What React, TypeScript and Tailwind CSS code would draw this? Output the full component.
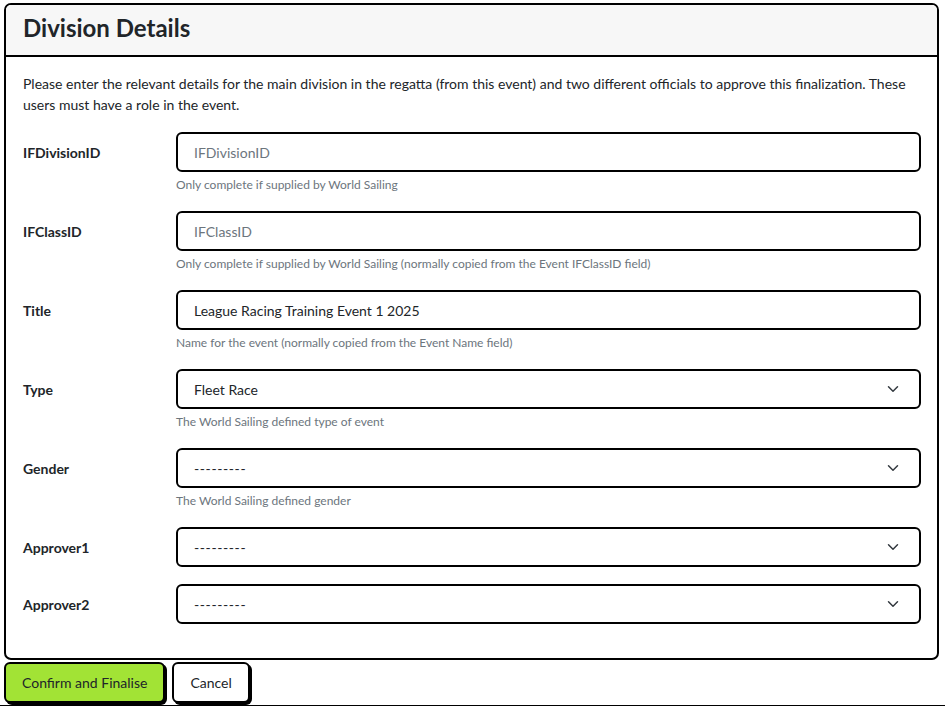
import React from "react";

const font = { fontFamily: 'Lato, "Noto Sans", sans-serif' };

function Chevron() {
  return (
    <svg width="12" height="12" viewBox="0 0 16 16" fill="none" stroke="#343a40" strokeWidth="2" strokeLinecap="round" strokeLinejoin="round">
      <path d="m2 5 6 6 6-6" />
    </svg>
  );
}

function Row({
  label,
  help,
  value,
  placeholder,
  select,
}: {
  label: string;
  help?: string;
  value?: string;
  placeholder?: string;
  select?: boolean;
}) {
  return (
    <div className="flex mb-[17px]">
      <div className="w-[153px] h-[40px] flex items-center text-[14px] font-bold text-[#212529] shrink-0">{label}</div>
      <div className="flex-1">
        <div className="h-[40px] border-2 border-black rounded-[6px] flex items-center justify-between pl-[16px] pr-[20px] text-[14px]">
          {value ? (
            <span className={value.startsWith("-") ? "text-[#212529] tracking-[0.6px]" : "text-[#212529]"}>{value}</span>
          ) : (
            <span className="text-[#6c757d]">{placeholder}</span>
          )}
          {select && <Chevron />}
        </div>
        {help && <div className="mt-[4px] text-[12px] leading-[18px] text-[#6c757d]">{help}</div>}
      </div>
    </div>
  );
}

export default function App() {
  return (
    <div className="w-[945px] h-[706px] bg-white overflow-hidden flex flex-col" style={font}>
      <div className="ml-[4px] mt-[3px] w-[935px] h-[657px] border-2 border-black rounded-[7px] overflow-hidden flex flex-col">
        <div className="h-[52px] bg-[#f7f7f7] border-b-2 border-black px-[17px] pb-[5px] flex items-center shrink-0">
          <h1 className="text-[24px] font-bold text-[#212529] leading-none">Division Details</h1>
        </div>
        <div className="pl-[17px] pr-[16px] pt-[16px]">
          <p className="text-[14px] leading-[21px] text-[#212529] mb-[17px]">
            Please enter the relevant details for the main division in the regatta (from this event) and two different officials to approve this finalization. These users must have a role in the event.
          </p>
          <Row label="IFDivisionID" placeholder="IFDivisionID" help="Only complete if supplied by World Sailing" />
          <Row
            label="IFClassID"
            placeholder="IFClassID"
            help="Only complete if supplied by World Sailing (normally copied from the Event IFClassID field)"
          />
          <Row label="Title" value="League Racing Training Event 1 2025" help="Name for the event (normally copied from the Event Name field)" />
          <Row label="Type" value="Fleet Race" select help="The World Sailing defined type of event" />
          <Row label="Gender" value="---------" select help="The World Sailing defined gender" />
          <Row label="Approver1" value="---------" select />
          <Row label="Approver2" value="---------" select />
        </div>
      </div>
      <div className="flex items-start gap-[7px] ml-[4px] mt-[2px]">
        <button className="h-[41px] px-[16px] bg-[#a2e335] border-2 border-black rounded-[6px] shadow-[2px_2px_0_0_#000] text-[14px] text-[#212529]">
          Confirm and Finalise
        </button>
        <button className="h-[41px] px-[16px] bg-white border-2 border-black rounded-[6px] shadow-[2px_2px_0_0_#000] text-[14px] text-[#212529]">
          Cancel
        </button>
      </div>
      <div className="h-px bg-black mt-auto w-full" />
    </div>
  );
}
